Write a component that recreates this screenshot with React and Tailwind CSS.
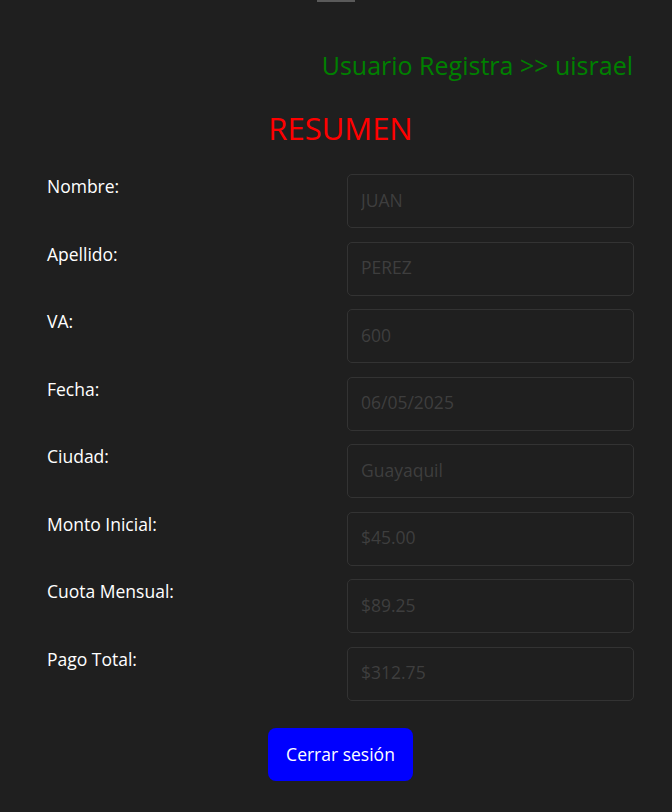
import React from 'react';

const rows = [
  { label: 'Nombre:', value: 'JUAN' },
  { label: 'Apellido:', value: 'PEREZ' },
  { label: 'VA:', value: '600' },
  { label: 'Fecha:', value: '06/05/2025' },
  { label: 'Ciudad:', value: 'Guayaquil' },
  { label: 'Monto Inicial:', value: '$45.00' },
  { label: 'Cuota Mensual:', value: '$89.25' },
  { label: 'Pago Total:', value: '$312.75' },
];

const App = () => {
  return (
    <div className="min-h-[812px] bg-[#1f1f1f] font-['Open_Sans',sans-serif] text-white">
      <div className="flex justify-center">
        <div className="h-[2px] w-[38px] bg-[#5a5a5a]"></div>
      </div>
      <div className="pl-[47px] pr-[38px]">
        <div className="mt-[47px] pr-[1px] text-right text-[25px] leading-[32px] text-[#008000]">
          Usuario Registra &gt;&gt; uisrael
        </div>
        <h1 className="mt-[28px] text-center text-[31px] leading-[38px] text-[#ff0000]">RESUMEN</h1>
        <div className="mt-[27px] flex flex-col gap-[13.5px]">
          {rows.map((row) => (
            <div key={row.label} className="flex items-start justify-between">
              <label className="pt-[1px] text-[17.5px] leading-[22px]">{row.label}</label>
              <input
                type="text"
                disabled
                placeholder={row.value}
                className="h-[54px] w-[287px] rounded-[5px] border border-[#333333] bg-transparent px-[13px] pb-[3px] text-[17.5px] placeholder:text-[#3e3e3e] outline-none"
              />
            </div>
          ))}
        </div>
        <div className="mt-[27px] flex justify-center">
          <button className="h-[53px] w-[145px] rounded-[8px] bg-[#0000ff] text-[17.5px] text-white">
            Cerrar sesión
          </button>
        </div>
      </div>
    </div>
  );
};

export default App;
